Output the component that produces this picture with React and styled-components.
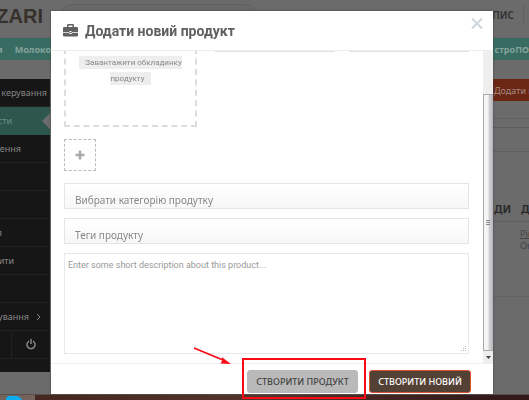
import React from "react";
import styled, { createGlobalStyle } from "styled-components";

const Global = createGlobalStyle`
  * { box-sizing: border-box; }
  html, body { margin: 0; overflow: hidden; }
  body { background: #6b6b6b; font-family: "Noto Sans", "Open Sans", sans-serif; font-size: 10px; color: #333; }
  button, input, textarea { font: inherit; margin: 0; }
`;

const Page = styled.div`
  height: 100vh;
  overflow: hidden;
  display: flex;
  flex-direction: column;
`;
const TopBar = styled.header`
  height: 38px;
  flex: none;
  display: flex;
  justify-content: space-between;
  padding-top: 4px;
`;
const Logo = styled.div`
  width: 43px;
  height: 24px;
  display: flex;
  justify-content: flex-end;
  font: bold 20px/24px "Liberation Sans Narrow", "Liberation Sans", sans-serif;
  color: #37312b;
`;
const Search = styled.input`
  flex: 1;
  max-width: 198px;
  height: 24px;
  margin-left: 17px;
  border: 1px solid #616161;
  border-radius: 12px;
  background: #686868;
`;
const Account = styled.a`
  height: 20px;
  margin-left: auto;
  padding-right: 9px;
  margin-right: 5px;
  border-right: 1px solid #606060;
  font-weight: 600;
  line-height: 22px;
  color: #303030;
  text-decoration: none;
`;
const Nav = styled.nav`
  height: 22px;
  flex: none;
  display: flex;
  justify-content: space-between;
  background: #386b61;
  overflow: hidden;
`;
const NavLink = styled.a`
  font-size: 9px;
  font-weight: bold;
  line-height: 23px;
  color: #83a39c;
  text-decoration: none;
`;
const NavGroup = styled.div`
  width: 51px;
  display: flex;
  justify-content: flex-end;
  gap: 12px;
`;
const Columns = styled.div`
  flex: 1;
  display: flex;
  justify-content: space-between;
  padding-top: 19px;
`;
const Sidebar = styled.aside`
  width: 50px;
  height: 293px;
  background: #161616;
  overflow: hidden;
`;
const SideRow = styled.a`
  position: relative;
  display: flex;
  align-items: center;
  justify-content: flex-end;
  gap: 7px;
  height: 28px;
  padding-right: ${(p) => p.$end || 0}px;
  overflow: hidden;
  white-space: nowrap;
  color: ${(p) => (p.$active ? "#699087" : "#858585")};
  background: ${(p) => (p.$active ? "#2d564d" : "#161616")};
  border-bottom: 1px solid ${(p) => (p.$active ? "#2d564d" : "#222")};
  font-size: 9px;
  text-decoration: none;
  svg { flex: none; }
`;
const Notch = styled.span`
  position: absolute;
  right: 0;
  border: 8px solid transparent;
  border-left: 0;
  border-right-color: #6b6b6b;
`;
const PowerRow = styled.div`
  height: 28px;
  display: flex;
  border-bottom: 1px solid #222;
`;
const PowerButton = styled.button`
  flex: 1;
  margin-left: 11px;
  padding: 0;
  border: 0;
  border-left: 1px solid #222;
  background: none;
  color: #858585;
  svg { display: block; margin: 0 auto; }
`;
const Content = styled.main`
  width: 36px;
  overflow: hidden;
`;
const AddButton = styled.button`
  display: block;
  width: 80px;
  height: 22px;
  padding: 0 0 0 1px;
  border: 0;
  background: #6b2614;
  color: #a18b84;
  text-align: left;
  font-size: 9px;
`;
const Panel = styled.div`
  height: 34px;
  margin-top: 17px;
  border-top: 1px solid #606060;
  border-bottom: 1px solid #606060;
`;
const PanelBar = styled.div`
  margin-top: 8px;
  border-top: 1px solid #5c5c5c;
`;
const Orders = styled.table`
  width: 54px;
  margin-top: 46px;
  border-collapse: collapse;
  table-layout: fixed;
  text-align: left;
  th { padding: 0 0 0 1px; height: 23px; font-size: 11px; line-height: 14px; color: #2b2b2b; border-bottom: 1px solid #5f5f5f; }
  td { padding: 6px 0 0; height: 75px; vertical-align: top; font-size: 9px; line-height: 12px; color: #444; border-bottom: 1px solid #626262; }
`;

const Overlay = styled.div`
  position: fixed;
  inset: 0 0 6px;
  display: flex;
  padding: 11px 36px 0 51px;
`;
const Dialog = styled.section`
  flex: 1;
  min-width: 0;
  display: flex;
  flex-direction: column;
  background: #fff;
  box-shadow: 0 0 2px #444;
`;
const DialogHead = styled.header`
  height: 40px;
  flex: none;
  display: flex;
  align-items: center;
  gap: 7px;
  padding: 0 10px 0 12px;
  border-bottom: 1px solid #ededed;
  color: #606060;
`;
const Title = styled.h2`
  margin: 0;
  font: bold 14px/18px Roboto, sans-serif;
`;
const Close = styled.button`
  align-self: flex-start;
  margin: 7px 0 0 auto;
  padding: 0;
  border: 0;
  background: none;
  svg { display: block; }
`;
const Scroller = styled.div`
  flex: 1;
  min-height: 0;
  display: flex;
`;
const Form = styled.form`
  flex: 1;
  min-width: 0;
  display: flex;
  flex-direction: column;
  justify-content: flex-end;
  padding: 0 14px 9px 13px;
  overflow: hidden;
`;
const FormTop = styled.div`
  display: flex;
  align-items: flex-start;
  gap: 18px;
`;
const Upload = styled.div`
  flex: none;
  width: 133px;
  height: 110px;
  padding: 36px 8px 0;
  border: 2px dashed #ddd;
  text-align: center;
`;
const UploadButton = styled.button`
  width: 100%;
  padding: 0;
  border: 0;
  background: none;
  color: #888;
  font-family: Roboto, sans-serif;
  font-size: 8px;
  line-height: 16px;
`;
const UploadText = styled.span`
  padding: 2px 6px;
  background: #eee;
`;
const Group = styled.div`
  flex: 1;
  min-width: 0;
  height: 35px;
  display: flex;
  border: 1px solid #e2e2e2;
  & + & { margin-left: -4px; }
`;
const Addon = styled.span`
  width: 22px;
  flex: none;
  background: #eee;
  border-right: 1px solid #ddd;
`;
const GroupInput = styled.input`
  flex: 1;
  min-width: 0;
  border: 0;
`;
const AddImage = styled.button`
  flex: none;
  width: 32px;
  height: 32px;
  margin: 12px 0;
  padding: 0;
  border: 1px dashed #bbb;
  background: none;
  svg { display: block; margin: 0 auto; }
`;
const Field = styled.input`
  flex: none;
  width: 100%;
  height: 26px;
  margin-bottom: 9px;
  padding: 7px 10px 0;
  border: 1px solid #e5e5e5;
  background: linear-gradient(#fff, #f7f7f7);
  &::placeholder { color: #888; opacity: 1; }
`;
const Description = styled.textarea`
  flex: none;
  width: 100%;
  height: 101px;
  padding: 4px 3px;
  border: 1px solid #e8e8e8;
  resize: none;
  font-family: Roboto, sans-serif;
  font-size: 9px;
  line-height: 14px;
  &::placeholder { color: #999; opacity: 1; }
`;
const DescriptionBox = styled.div`
  position: relative;
  display: flex;
`;
const Grip = styled.svg`
  position: absolute;
  right: 2px;
  bottom: 2px;
`;
const Scrollbar = styled.div`
  width: 10px;
  display: flex;
  flex-direction: column;
  background: #eee;
`;
const Thumb = styled.div`
  flex: 1;
  margin-top: 43px;
  display: flex;
  align-items: center;
  justify-content: center;
  border: 1px solid #aaa;
  border-right: 0;
  background: linear-gradient(90deg, #f5f5f5 0 40%, #d2d2d5 60%, #b5b5ba);
`;
const ScrollDown = styled.div`
  height: 12px;
  display: flex;
  align-items: center;
  justify-content: center;
`;
const Actions = styled.footer`
  height: 31px;
  flex: none;
  display: flex;
  justify-content: flex-end;
  align-items: flex-start;
  gap: 11px;
  padding: 6px 22px 0;
  border-top: 1px solid #eee;
`;
const Marked = styled.div`
  position: relative;
`;
const Frame = styled.span`
  position: absolute;
  inset: -12px -8px -6px -5px;
  border: 2px solid #f80b14;
  z-index: 2;
  pointer-events: none;
`;
const Arrow = styled.svg`
  position: absolute;
  left: -55px;
  top: -24px;
`;
const Action = styled.button`
  display: block;
  width: ${(p) => (p.$primary ? 102 : 111)}px;
  height: 23px;
  padding: 0;
  white-space: nowrap;
  font-size: 9px;
  font-weight: 500;
  border: 1px solid ${(p) => (p.$primary ? "#d95232" : "#b8b8b8")};
  border-radius: 3px;
  background: ${(p) => (p.$primary ? "#544135" : "#b9b9b9")};
  color: ${(p) => (p.$primary ? "#fff" : "#444")};
`;
const Taskbar = styled.div`
  height: 6px;
  flex: none;
  display: flex;
  border-top: 1px solid #57504d;
  background: linear-gradient(90deg, #42241e, #54352e 50%, #331a18 90%);
`;
const Task = styled.div`
  width: 35px;
  padding-left: 6px;
  background: #75625d;
  svg { display: block; }
`;

export default function App() {
  return (
    <>
      <Global />
      <Page>
        <TopBar>
          <Logo>ZARI</Logo>
          <Search aria-label="Пошук" />
          <Account href="#">АПИС</Account>
        </TopBar>
        <Nav>
          <NavGroup>
            <NavLink href="#">я</NavLink>
            <NavLink href="#">Молоко</NavLink>
          </NavGroup>
          <NavLink href="#">строПО</NavLink>
        </Nav>
        <Columns>
          <Sidebar>
            <SideRow href="#" $end={3}>ь керування</SideRow>
            <SideRow href="#" $active $end={38}>сти<Notch /></SideRow>
            <SideRow href="#" $end={29}>ення</SideRow>
            <SideRow href="#" />
            <SideRow href="#" />
            <SideRow href="#" $end={48}>я</SideRow>
            <SideRow href="#" $end={36}>ити</SideRow>
            <SideRow href="#" />
            <SideRow href="#" $end={9}>тування
              <svg width="5" height="8" viewBox="0 0 5 8" fill="none" stroke="#858585"><path d="M1 1l3 3-3 3" /></svg>
            </SideRow>
            <PowerRow>
              <PowerButton aria-label="Вийти">
                <svg width="10" height="11" viewBox="0 0 10 11" fill="none" stroke="#858585" strokeWidth="1.5"><path d="M3 2.2a4 4 0 1 0 4 0M5 0v5" /></svg>
              </PowerButton>
            </PowerRow>
          </Sidebar>
          <Content>
            <AddButton>Додати н</AddButton>
            <Panel><PanelBar /></Panel>
            <Orders>
              <thead><tr><th>ДИ</th><th>Д</th></tr></thead>
              <tbody><tr><td /><td><u>Pin</u><br />Orc</td></tr></tbody>
            </Orders>
          </Content>
        </Columns>
        <Taskbar>
          <Task>
            <svg width="17" height="5" viewBox="0 0 17 5"><path d="M0 5V3Q2 0 6 1Q13 0 16 5z" fill="#0aaeee" /></svg>
          </Task>
        </Taskbar>
      </Page>
      <Overlay>
        <Dialog role="dialog" aria-labelledby="title">
          <DialogHead>
            <svg width="15" height="13" viewBox="0 0 15 13" fill="#606060">
              <path fillRule="evenodd" d="M4 3V1.2Q4 0 5.2 0h4.6Q11 0 11 1.2V3h2.8Q15 3 15 4.2V8H9.500Q9 9 7.500 9T5.500 8H0V4.2Q0 3 1.2 3zM5.5 3h4V1.4h-4zM6.500 7h2v1h-2z" />
              <path d="M0 8.800h5.500q.5 1.200 2 1.200t2-1.200H15v2.800q0 1-1.2 1H1.2Q0 12.600 0 11.600z" />
            </svg>
            <Title id="title">Додати новий продукт</Title>
            <Close aria-label="Закрити">
              <svg width="12" height="11" viewBox="0 0 12 11" stroke="#cfd6dc" strokeWidth="2"><path d="M1 .5l10 10M11 .5l-10 10" /></svg>
            </Close>
          </DialogHead>
          <Scroller>
            <Form>
              <FormTop>
                <Upload>
                  <UploadButton type="button"><UploadText>Завантажити обкладинку продукту</UploadText></UploadButton>
                </Upload>
                <Group><Addon /><GroupInput aria-label="Назва" /></Group>
                <Group><Addon /><GroupInput aria-label="Ціна" /></Group>
              </FormTop>
              <AddImage type="button" aria-label="Додати зображення">
                <svg width="10" height="10" viewBox="0 0 10 10" stroke="#aaa" strokeWidth="2.6"><path d="M5 .5v9M.5 5h9" /></svg>
              </AddImage>
              <Field aria-label="Категорія" placeholder="Вибрати категорію продутку" />
              <Field aria-label="Теги" placeholder="Теги продукту" />
              <DescriptionBox>
                <Description aria-label="Опис" placeholder="Enter some short description about this product..." />
                <Grip width="6" height="6" viewBox="0 0 6 6" fill="#bbb"><path d="M4 0h1v1H4zM2 2h1v1H2zM4 2h1v1H4zM0 4h1v1H0zM2 4h1v1H2zM4 4h1v1H4z" /></Grip>
              </DescriptionBox>
            </Form>
            <Scrollbar>
              <Thumb>
                <svg width="5" height="6" viewBox="0 0 5 6" stroke="#888"><path d="M0 .5h4M0 2.500h4M0 4.500h4" /></svg>
              </Thumb>
              <ScrollDown>
                <svg width="5" height="3" viewBox="0 0 5 3" fill="#444"><path d="M0 0h5L2.500 3z" /></svg>
              </ScrollDown>
            </Scrollbar>
          </Scroller>
          <Actions>
            <Marked>
              <Action>СТВОРИТИ ПРОДУКТ</Action>
              <Frame />
              <Arrow width="40" height="20" viewBox="0 0 40 20">
                <path d="M2 2l29 12" stroke="#f80b14" strokeWidth="1.800" />
                <path d="M39 18l-10.500-.5 1.800-3-.6-3.500z" fill="#f80b14" />
              </Arrow>
            </Marked>
            <Action $primary>СТВОРИТИ НОВИЙ</Action>
          </Actions>
        </Dialog>
      </Overlay>
    </>
  );
}
